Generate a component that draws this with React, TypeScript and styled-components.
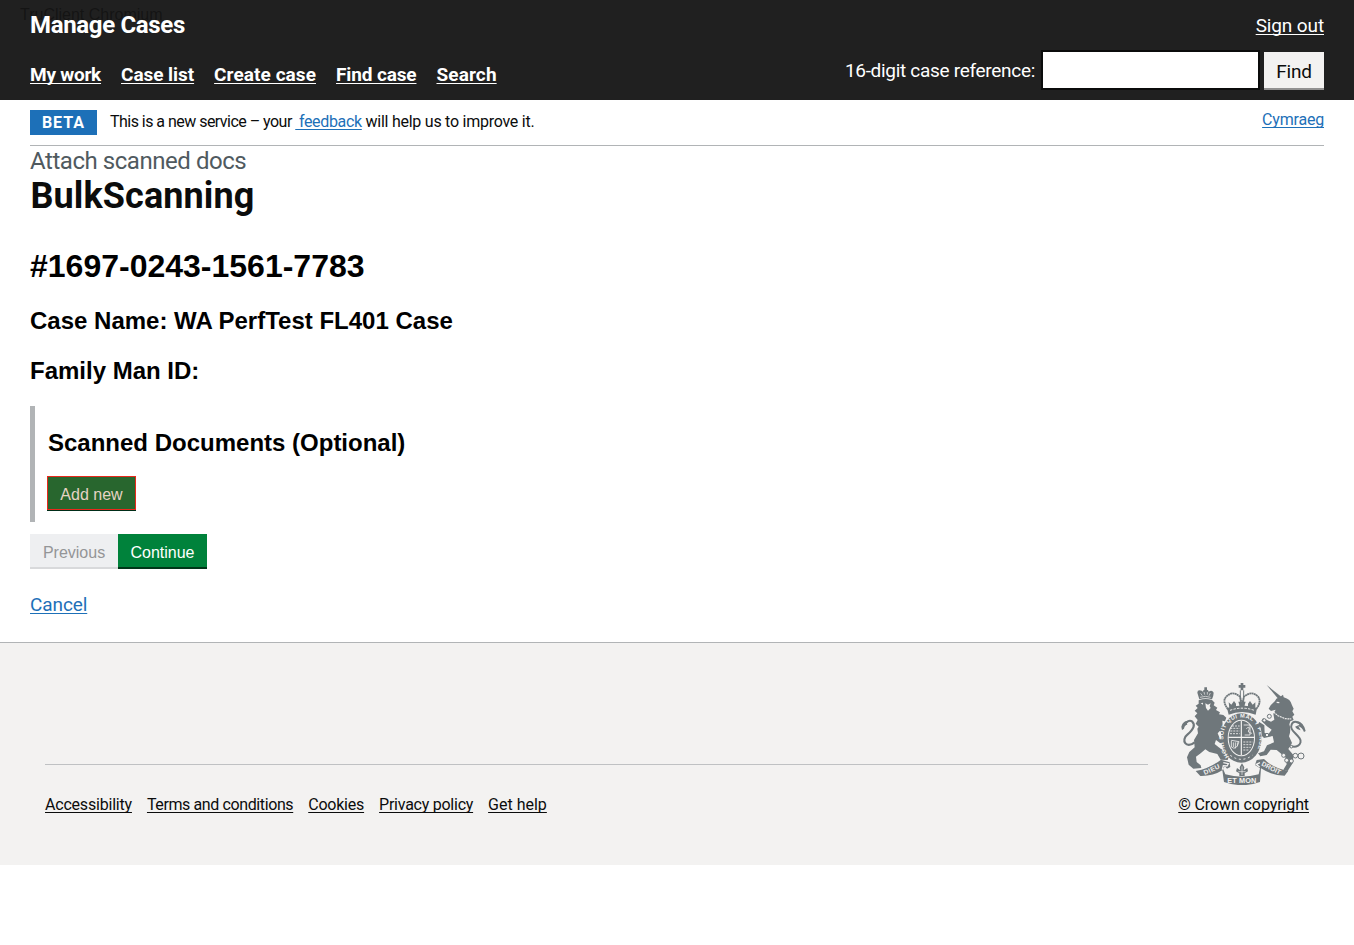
import React from "react";
import styled, { createGlobalStyle } from "styled-components";

const Global = createGlobalStyle`
  * { box-sizing: border-box; }
  body { margin: 0; background: #fff; }
  h1, h2, h3, p { margin: 0; }
`;

const transport = `Roboto, "Liberation Sans", sans-serif`;
const arial = `"Liberation Sans", Arial, sans-serif`;

const Page = styled.div`
  font-family: ${transport};
  color: #0b0c0c;
`;

const Header = styled.header`
  position: relative;
  height: 100px;
  padding: 0 30px;
  background: #202020;
  color: #fff;
`;

const Watermark = styled.span`
  position: absolute;
  left: 20px;
  top: 6px;
  font: 16px/18px ${arial};
  color: rgba(0, 0, 0, 0.4);
`;

const HeaderRow = styled.div`
  display: flex;
  justify-content: space-between;
  height: 50px;
`;

const Brand = styled.div`
  position: relative;
  font-size: 24px;
  font-weight: 700;
  line-height: 50px;
  letter-spacing: -0.33px;
`;

const Link = styled.a<{
  $size?: number;
  $ls?: number;
  $color?: string;
  $bold?: boolean;
}>`
  font-size: ${(p) => p.$size ?? 16}px;
  font-weight: ${(p) => (p.$bold ? 700 : 400)};
  letter-spacing: ${(p) => p.$ls ?? 0}px;
  color: ${(p) => p.$color ?? "#0b0c0c"};
  white-space: pre;
  text-decoration: underline;
  text-decoration-thickness: 1px;
  text-underline-offset: 2px;
  text-decoration-skip-ink: none;
`;

const Nav = styled.nav`
  display: flex;
  gap: 20px;
  line-height: 50px;
`;

const SignOut = styled.div`
  line-height: 52px;
`;

const SearchForm = styled.form`
  display: flex;
  align-items: flex-start;
`;

const SearchLabel = styled.label`
  margin-right: 6px;
  font-size: 19px;
  line-height: 42px;
  letter-spacing: -0.3px;
`;

const SearchInput = styled.input`
  width: 219px;
  height: 40px;
  margin-right: 4px;
  border: 2px solid #0b0c0c;
  border-radius: 0;
  background: #fff;
`;

const FindButton = styled.button`
  width: 60px;
  height: 36px;
  margin-top: 2px;
  padding: 3px 0 0;
  border: 0;
  background: #f3f2f1;
  box-shadow: 0 2px 0 #929191;
  color: #0b0c0c;
  font: 19px/33px ${transport};
  letter-spacing: -0.2px;
`;

const Banner = styled.div`
  display: flex;
  align-items: flex-start;
  height: 46px;
  margin: 0 30px;
  padding-top: 10px;
  border-bottom: 1px solid #b1b4b6;
`;

const Tag = styled.strong`
  width: 67px;
  height: 25px;
  margin-right: 13px;
  background: #1d70b8;
  color: #fff;
  font-size: 16px;
  line-height: 25px;
  letter-spacing: 1px;
  text-align: center;
`;

const BannerText = styled.p`
  flex: 1;
  font-size: 16px;
  line-height: 24px;
`;

const Spaced = styled.span<{ $ls: number }>`
  letter-spacing: ${(p) => p.$ls}px;
`;

const Language = styled.div`
  line-height: 20px;
`;

const Main = styled.main`
  height: 496px;
  padding: 0 30px;
`;

const Caption = styled.p`
  height: 30px;
  color: #505a5f;
  font-size: 24px;
  line-height: 30px;
  letter-spacing: -0.45px;
`;

const Title = styled.h1`
  padding-left: 0.5px;
  font-size: 36px;
  line-height: 40px;
  letter-spacing: 0.1px;
`;

const CaseNumber = styled.h1`
  margin-top: 31px;
  color: #000;
  font: 700 32px/38px ${arial};
`;

const Detail = styled.h3<{ $mt: number }>`
  margin-top: ${(p) => p.$mt}px;
  color: #000;
  font: 700 24px/28px ${arial};
`;

const Section = styled.section`
  height: 116px;
  margin-top: 21px;
  padding: 1px 0 0 13px;
  border-left: 5px solid #b1b4b6;
`;

const AddButton = styled.button`
  display: block;
  width: 89px;
  height: 34px;
  margin: 19px 0 0 -1px;
  padding: 4px 0 0;
  border: 1px solid #e8291c;
  background: #28662e;
  box-shadow: 0 1px 0 #002d18;
  color: #e6d3c4;
  font: 16px/28px ${arial};
`;

const Actions = styled.div`
  display: flex;
  margin-top: 12px;
`;

const ActionButton = styled.button<{ $primary?: boolean }>`
  width: ${(p) => (p.$primary ? 89 : 88)}px;
  height: 33px;
  padding: 4px 0 0;
  border: 0;
  background: ${(p) => (p.$primary ? "#00823b" : "#eeeff1")};
  box-shadow: 0 2px 0 ${(p) => (p.$primary ? "#003618" : "#d8d9db")};
  color: ${(p) => (p.$primary ? "#fff" : "#949597")};
  font: 16px/29px ${arial};
`;

const CancelRow = styled.p`
  margin-top: 26px;
  line-height: 24px;
`;

const Footer = styled.footer`
  display: flex;
  justify-content: space-between;
  height: 223px;
  padding: 40px 45px 0;
  border-top: 1px solid #b1b4b6;
  background: #f3f2f1;
`;

const FooterMain = styled.div`
  width: 1103px;
  padding-top: 81px;
`;

const FooterLinks = styled.div`
  display: flex;
  gap: 15px;
  padding-top: 30px;
  border-top: 1px solid #bfc1c3;
  line-height: 20px;
`;

const Copyright = styled.div`
  display: flex;
  flex-direction: column;
  align-items: flex-end;
  line-height: 20px;
`;

const CrestSvg = styled.svg`
  display: block;
  width: 125px;
  height: 102px;
  margin: 0 3px 10px 0;
`;

const GREY = "#6f777b";
const PAPER = "#f3f2f1";

const Crest = () => (
  <CrestSvg viewBox="33 24 375 306" fill={GREY}>
    {/* lion and its crown */}
    <g transform="translate(24 15)">
      <path d="M64 58L58 38Q58 28 71 32L75 35Q75 29 79 29V22H87V29Q91 29 92 35Q102 28 107 38Q107 46 102 58Q82 52 64 58Z" />
      <path d="M68 40L73 47M78 36L80 44M88 44V36M97 39L93 47M66 52Q82 46 98 52" stroke={PAPER} strokeWidth="2" fill="none" />
      <path d="M62 61Q82 54 102 60L110 68L107 76L118 83L114 90L126 97L123 103L136 105L145 113L141 124L133 122L134 134L140 148L142 165L134 168L126 152L119 160L124 172L136 186L130 192L114 180L110 192L122 202L134 210L140 222L152 231L149 240L128 239L118 222L94 216L82 208L68 220L54 230L56 246L68 256L70 264L46 266L32 254L27 232L34 216L50 202L48 180L60 160L58 146L62 140L53 131L59 120L50 109L58 100L50 92L59 84L53 77L62 71Z" />
      <path d="M82 70L90 74L98 70L95 78L98 84L90 92L84 84ZM68 70L75 68L75 74Z" fill={PAPER} />
      <path d="M50 187C24 208 8 180 28 164C48 146 52 134 43 125C34 118 24 126 18 136" fill="none" stroke={GREY} strokeWidth="6.5" />
      <path d="M10 140Q16 120 33 124Q24 130 28 134Q20 134 18 146L12 150Z" />
    </g>
    {/* central crown */}
    <path d="M212 24H220V30H226V38H220V46H212V38H206V30H212Z" />
    <g fill="none" stroke={GREY}>
      <path d="M174 103Q156 79 168 66Q187 45 210 65L216 88L222 65Q247 45 265 66Q275 82 258 103" strokeWidth="5.5" strokeDasharray="6 1" />
      <path d="M211 46V94M221 46V94" strokeWidth="3" />
    </g>
    <path d="M171 99Q216 84 261 99L257 119Q216 103 176 119Z" />
    <path d="M176 82L184 89L192 78L198 86V98L178 100ZM205 80H227L222 97H210ZM234 86L240 78L248 89L256 82V100L234 98Z" />
    <path d="M180 106Q216 93 253 106" fill="none" stroke={PAPER} strokeWidth="3" strokeDasharray="7 4" />
    {/* garter and shield */}
    <ellipse cx="214" cy="189" rx="61" ry="74" />
    <ellipse cx="214" cy="189" rx="41" ry="55" fill={PAPER} />
    <ellipse cx="214" cy="189" rx="38" ry="52" />
    <path d="M214 138V240M175 187H253" stroke={PAPER} strokeWidth="3.5" />
    <g stroke={PAPER} strokeWidth="2.5" fill="none">
      <path d="M186 153H209M181 160H209M181 168H209M180 176H209M220 201H248M220 209H245M220 217H242M220 225H236" strokeDasharray="6 3" />
      <path d="M221 150H240V180H224M229 161Q240 151 237 164Q230 173 246 175M184 197V216Q199 228 207 200L184 196M190 202V216M196 202V220M202 202V214" />
    </g>
    <path id="garter" d="M177 245C145 200 157 128 214 128C271 128 283 200 251 245" fill="none" />
    <text fill={PAPER} fontFamily="Liberation Sans" fontWeight="700" fontSize="17">
      <textPath href="#garter" textLength="276">HONI SOIT QUI MAL Y PENSE</textPath>
    </text>
    <path d="M181 241Q214 265 247 241" stroke={PAPER} strokeWidth="3" strokeDasharray="6 8" fill="none" />
    {/* unicorn */}
    <path d="M290 30L334 65L325 72Z" />
    <path d="M330 66L339 59L341 67Q362 72 366 91L371 101L367 109L373 119L367 125L371 135L361 139L358 148Q364 165 357 184L366 204L355 222L370 240L369 263L353 288L340 284L350 268L346 247L320 225L302 224L290 240L271 244L264 235L282 229L291 211L312 202L308 183L282 189L276 183L272 158L262 151L268 141L283 151L284 174L296 176L305 164L290 153L274 137L279 130L303 140L313 134L310 116L317 104L303 108L296 101L302 91L315 78L319 71Z" />
    <path d="M310 111L324 122L345 131L364 132" fill="none" stroke={PAPER} strokeWidth="3.5" strokeDasharray="6 2" />
    <path d="M320 82L328 83" stroke={PAPER} strokeWidth="4" />
    <path d="M352 208C378 226 400 206 389 190C376 172 358 164 365 148C371 135 386 141 396 152" fill="none" stroke={GREY} strokeWidth="6" />
    <path d="M380 137Q402 142 407 168L402 171Q397 158 385 153L392 166Q380 164 375 155L389 149Z" />
    <g fill={PAPER} stroke={GREY} strokeWidth="3">
      <circle cx="298" cy="124" r="6" />
      <circle cx="283" cy="136" r="5" />
      <circle cx="291" cy="180" r="5" />
      <circle cx="364" cy="215" r="4" />
      <circle cx="341" cy="241" r="6" />
      <circle cx="350" cy="256" r="6" />
      <circle cx="376" cy="242" r="7" />
      <circle cx="393" cy="243" r="9" />
      <circle cx="364" cy="258" r="6" />
    </g>
    {/* motto ribbon */}
    <path d="M77 288Q118 281 153 254L179 262L181 276L171 281L165 274L159 281L166 298Q216 312 266 298L270 280L255 270L260 255L282 252Q309 280 355 287L344 302Q304 301 273 280L270 321Q216 340 162 321L157 286Q129 304 91 303Z" />
    <path d="M160 263L175 266L171 273L160 272L157 284M270 263L259 268L269 276" fill="none" stroke={PAPER} strokeWidth="4" />
    <path d="M216 265L223 277L221 286L232 279L234 289L224 295V303H208V295L198 289L201 279L211 286L209 277Z" />
    <path d="M216 274V300M205 290H227" stroke={PAPER} strokeWidth="2" />
    <g fill={PAPER} fontFamily="Liberation Sans" fontWeight="700">
      <text x="104" y="300" fontSize="20" textLength="51" transform="rotate(-24 104 300)">DIEU</text>
      <text x="172" y="325" fontSize="22" textLength="87">ET MON</text>
      <text x="273" y="271" fontSize="20" textLength="62" transform="rotate(27 273 271)">DROIT</text>
    </g>
  </CrestSvg>
);

const navItems = [
  { label: "My work", ls: -0.24 },
  { label: "Case list", ls: -0.06 },
  { label: "Create case", ls: 0.07 },
  { label: "Find case", ls: -0.13 },
  { label: "Search", ls: 0.12 },
];

const footerItems = [
  { label: "Accessibility", ls: -0.2 },
  { label: "Terms and conditions", ls: -0.39 },
  { label: "Cookies", ls: -0.22 },
  { label: "Privacy policy", ls: -0.25 },
  { label: "Get help", ls: 0 },
];

export default function App() {
  return (
    <Page>
      <Global />
      <Header>
        <Watermark>TruClient Chromium</Watermark>
        <HeaderRow>
          <Brand>Manage Cases</Brand>
          <SignOut>
            <Link $size={19} $color="#fff" $ls={-0.12}>Sign out</Link>
          </SignOut>
        </HeaderRow>
        <HeaderRow>
          <Nav>
            {navItems.map((n) => (
              <Link key={n.label} $size={19} $bold $color="#fff" $ls={n.ls}>{n.label}</Link>
            ))}
          </Nav>
          <SearchForm>
            <SearchLabel htmlFor="ref">16-digit case reference:</SearchLabel>
            <SearchInput id="ref" />
            <FindButton type="button">Find</FindButton>
          </SearchForm>
        </HeaderRow>
      </Header>
      <Banner>
        <Tag>BETA</Tag>
        <BannerText>
          <Spaced $ls={-0.53}>This is a new service – your </Spaced>
          <Link $color="#1d70b8" $ls={-0.33}> feedback</Link>
          <Spaced $ls={-0.25}> will help us to improve it.</Spaced>
        </BannerText>
        <Language>
          <Link $color="#1d70b8" $ls={-0.2}>Cymraeg</Link>
        </Language>
      </Banner>
      <Main>
        <Caption>Attach scanned docs</Caption>
        <Title>BulkScanning</Title>
        <CaseNumber>#1697-0243-1561-7783</CaseNumber>
        <Detail $mt={22}>Case Name: WA PerfTest FL401 Case</Detail>
        <Detail $mt={22}>Family Man ID:</Detail>
        <Section>
          <Detail $mt={22}>Scanned Documents (Optional)</Detail>
          <AddButton type="button">Add new</AddButton>
        </Section>
        <Actions>
          <ActionButton type="button" disabled>Previous</ActionButton>
          <ActionButton type="button" $primary>Continue</ActionButton>
        </Actions>
        <CancelRow>
          <Link $size={19} $color="#1d70b8" $ls={-0.1}>Cancel</Link>
        </CancelRow>
      </Main>
      <Footer>
        <FooterMain>
          <FooterLinks>
            {footerItems.map((f) => (
              <Link key={f.label} $ls={f.ls}>{f.label}</Link>
            ))}
          </FooterLinks>
        </FooterMain>
        <Copyright>
          <Crest />
          <Link $ls={-0.1}>© Crown copyright</Link>
        </Copyright>
      </Footer>
    </Page>
  );
}
